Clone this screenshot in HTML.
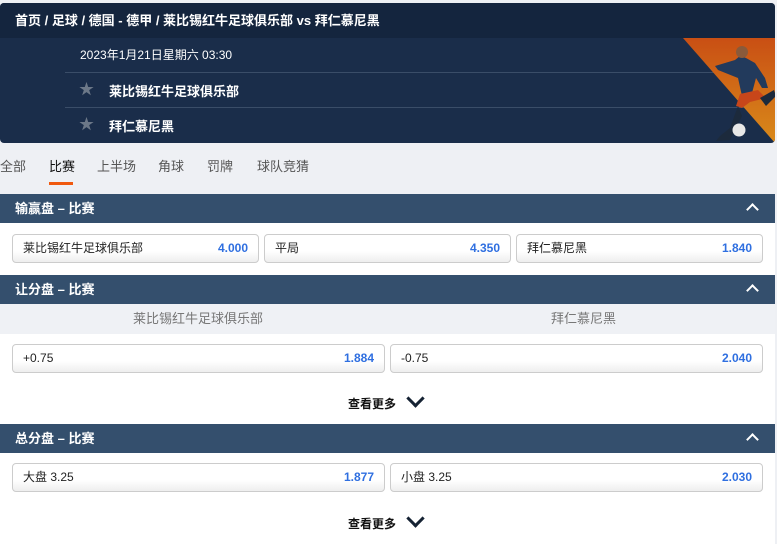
<!DOCTYPE html><html><head><meta charset="utf-8"><style>
*{margin:0;padding:0;box-sizing:border-box}
body{width:777px;height:544px;overflow:hidden;background:#eef0f4;font-family:"Liberation Sans","Noto Sans CJK SC",sans-serif;position:relative}
.abs{position:absolute}
.hdr{left:0;top:3px;width:775px;height:140px;background:#1a2d4a;border-radius:4px;overflow:hidden}
.top{left:0;top:0;width:775px;height:35px;background:#14253e;color:#fff;font-weight:bold;font-size:13px;line-height:35px;padding-left:15px}
.line{left:65px;width:710px;height:1px;background:#3a4d68}
.wt{color:#fff;font-size:13px}
.tabs span{position:absolute;top:156px;font-size:13px;color:#555}
.sec{left:0;width:775px;height:29px;background:#344f6d;color:#fff;font-weight:bold;font-size:13px;line-height:29px;padding-left:15px}
.white{left:0;width:775px;background:#fff}
.btn{position:absolute;height:29px;border:1px solid #ccc;border-radius:4px;background:linear-gradient(#fff 60%,#eee);font-size:12px;line-height:27px;padding:0 10px;color:#222}
.btn b{position:absolute;right:10px;top:0;color:#2f6fe0;font-size:12px}
.chev{position:absolute;right:18px;top:11px;width:9px;height:9px;border-left:2.5px solid #fff;border-top:2.5px solid #fff;transform:rotate(45deg)}
.more{position:absolute;left:348px;font-size:12px;color:#111;font-weight:bold}
.dn{position:absolute;left:409px;width:13px;height:13px;border-right:3px solid #152233;border-bottom:3px solid #152233;transform:rotate(45deg)}
.star{position:absolute;left:79px;color:#6c7888;font-size:15px}
</style></head><body>
<div class="abs hdr">
<div class="abs top">首页 / 足球 / 德国 - 德甲 / 莱比锡红牛足球俱乐部 vs 拜仁慕尼黑</div>
<div class="abs wt" style="left:80px;top:43px;font-size:12px">2023年1月21日星期六 03:30</div>
<div class="abs line" style="top:69px"></div>
<div class="abs line" style="top:104px"></div>
<div class="star" style="top:75px">★</div>
<div class="abs wt" style="left:109px;top:78px;font-weight:bold">莱比锡红牛足球俱乐部</div>
<div class="star" style="top:110px">★</div>
<div class="abs wt" style="left:109px;top:113px;font-weight:bold">拜仁慕尼黑</div>
<svg class="abs" style="left:680px;top:35px" width="95" height="105"><defs><linearGradient id="g" x1="0" y1="0" x2="0" y2="1"><stop offset="0" stop-color="#c94f14"/><stop offset="1" stop-color="#d98a1a"/></linearGradient></defs><polygon points="3,0 95,0 95,105" fill="url(#g)"/><path d="M35,28 L55,22 L60,18 L66,20 L75,25 L85,40 L88,50 L82,50 L76,40 L72,55 L62,58 L58,40 L38,32 Z" fill="#223a5c"/><path d="M60,56 L78,52 L86,60 L70,64 L62,70 L56,68 Z" fill="#c8461a"/><path d="M58,68 L50,90 L40,98 L36,103 L50,102 L62,78 Z" fill="#1c2a3c"/><path d="M80,60 L94,52 L96,58 L86,68 Z" fill="#1c2a3c"/><circle cx="59" cy="92" r="6.5" fill="#e8e8e8"/><circle cx="62" cy="14" r="6" fill="#8a5a3a"/></svg>
</div>
<div class="tabs"><span style="left:0">全部</span><span style="left:49px;color:#111">比赛</span><span style="left:97px">上半场</span><span style="left:158px">角球</span><span style="left:207px">罚牌</span><span style="left:257px">球队竞猜</span></div>
<div class="abs" style="left:49px;top:182px;width:24px;height:3px;background:#f0590f"></div>

<div class="abs white" style="top:194px;height:350px"></div>
<div class="abs sec" style="top:194px">输赢盘 – 比赛<div class="chev"></div></div>
<div class="btn" style="left:12px;top:234px;width:247px">莱比锡红牛足球俱乐部<b>4.000</b></div>
<div class="btn" style="left:264px;top:234px;width:247px">平局<b>4.350</b></div>
<div class="btn" style="left:516px;top:234px;width:247px">拜仁慕尼黑<b>1.840</b></div>

<div class="abs sec" style="top:275px">让分盘 – 比赛<div class="chev"></div></div>
<div class="abs" style="left:0;top:304px;width:775px;height:30px;background:#eff1f5;font-size:13px;color:#777;line-height:30px"><span class="abs" style="left:133px">莱比锡红牛足球俱乐部</span><span class="abs" style="left:551px">拜仁慕尼黑</span></div>
<div class="btn" style="left:12px;top:344px;width:373px">+0.75<b>1.884</b></div>
<div class="btn" style="left:390px;top:344px;width:373px">-0.75<b>2.040</b></div>
<div class="more" style="top:395px">查看更多</div><div class="dn" style="top:392px"></div>

<div class="abs sec" style="top:424px">总分盘 – 比赛<div class="chev"></div></div>
<div class="btn" style="left:12px;top:463px;width:373px">大盘 3.25<b>1.877</b></div>
<div class="btn" style="left:390px;top:463px;width:373px">小盘 3.25<b>2.030</b></div>
<div class="more" style="top:515px">查看更多</div><div class="dn" style="top:512px"></div>
</body></html>
